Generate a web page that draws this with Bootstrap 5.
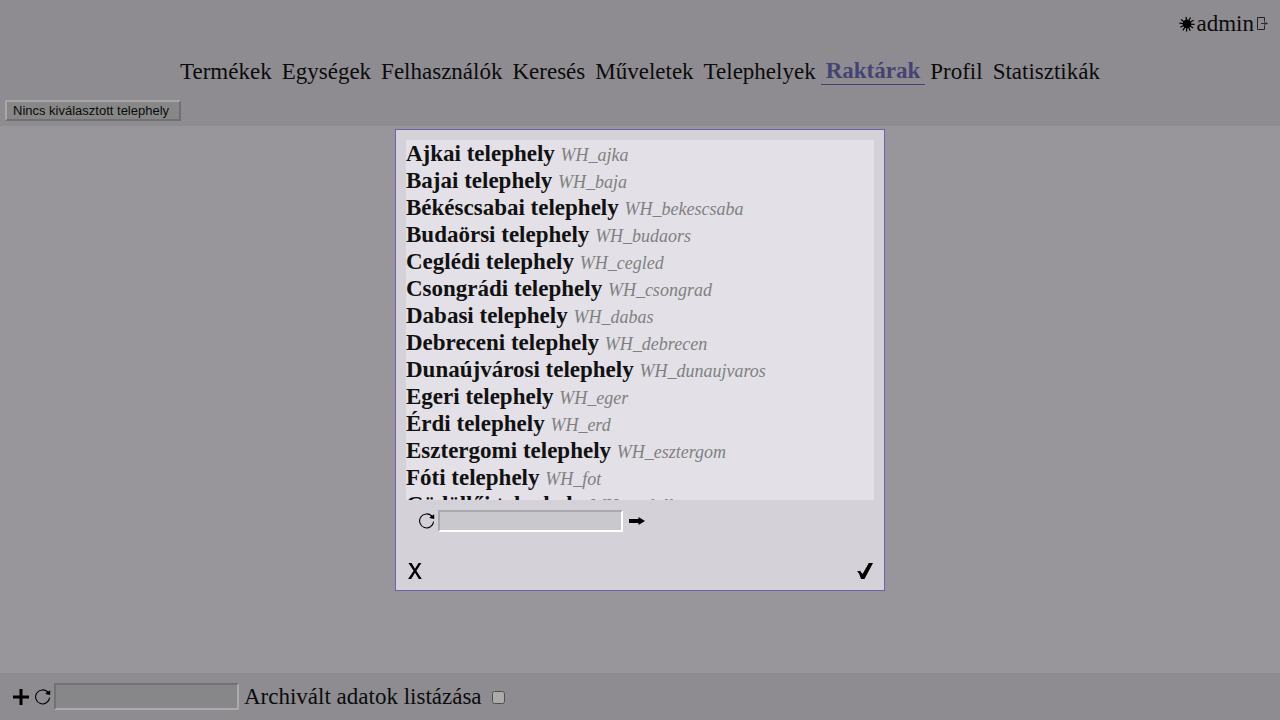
<!DOCTYPE html>
<html lang="hu">
<head>
<meta charset="utf-8">
<meta name="viewport" content="width=device-width, initial-scale=1">
<title>Raktárak</title>
<link href="https://cdn.jsdelivr.net/npm/bootstrap@5.3.0/dist/css/bootstrap.min.css" rel="stylesheet">
<style>
  body {
    font-family: "Liberation Serif", "Times New Roman", serif;
    font-size: 23px;
    line-height: 27px;
    color: #111;
    background: #e3e0e7;
  }
  .bar { background: #d4d1d8; }
  .user-row { padding: 10px 12px 10px 0; gap: 2px; }
  .main-nav a { color: #111; padding: 0 5px; text-decoration: none; }
  .main-nav a.active { color: #6865ac; font-weight: bold; border-bottom: 1px solid #6865ac; }
  .main-nav { padding-top: 10px; }
  .site-row { padding: 15px 5px 5px; }
  .site-btn {
    font: 13px/15px "Liberation Sans", Arial, sans-serif;
    color: #111;
    background: #c9c9cb;
    border: 2px solid;
    border-color: #fafafa #a8a8aa #a8a8aa #fafafa;
    padding: 1px 6px;
    height: 21px;
    min-width: 176px;
  }
  .icon-btn { background: none; border: 0; padding: 0; color: #000; line-height: 0; }
  .icon-btn svg, .user-row svg { display: block; width: 16px; height: 16px; }
  .field {
    width: 185px;
    height: 22px;
    background: #c9c8cc;
    border: 2px solid;
    border-color: #aaaaac #fff #fff #aaaaac;
    padding: 1px 2px;
    font-size: 13px;
  }
  .reload { margin-right: 3px; }
  .foot { padding: 10px 13px; }
  .foot .reload { margin-left: 6px; }
  .foot label { padding-left: 5px; }
  .foot .field { height: 27px; }
  .foot input[type=checkbox] { width: 13px; height: 13px; margin: 2px 0 0 10px; }
  .shade { background: rgba(0, 0, 0, .33); z-index: 10; }
  .picker { width: 490px; max-width: 100%; background: #d4d1d8; border: 1px solid #6865ac; padding: 10px; }
  .site-list { height: 50vh; overflow-y: auto; scrollbar-width: none; background: #e3e0e7; }
  .site-list::-webkit-scrollbar { display: none; }
  .site-list i { font-size: 18px; line-height: 20px; color: #808080; }
  .search-row { padding: 10px 12px 0 13px; }
  .search-row .go { margin-left: 6px; }
  .action-row { padding: 31px 1px 1px; }
</style>
</head>
<body>
<svg class="d-none" aria-hidden="true">
  <symbol id="reload" viewBox="0 0 16 16">
    <path d="M14.6 8.6A7 7 0 1 1 12.8 3.2" fill="none" stroke="currentColor" stroke-width="1.1"/>
    <path d="M10.3 5.1L15.2 6V1.2L13.6 2.6L12.4 1.8L11.7 3.4Z" fill="currentColor"/>
  </symbol>
</svg>

<div class="d-flex flex-column min-vh-100">
  <header class="bar">
    <div class="user-row d-flex justify-content-end align-items-center">
      <svg viewBox="0 0 16 16" aria-hidden="true">
        <circle cx="8" cy="8" r="4.4"/>
        <path d="M8 8L7 .8M8 8L11.5 1.5M8 8L14.6 4.3M8 8L15.6 8.3M8 8L14.2 12M8 8L11.2 14.8M8 8L7.5 15.6M8 8L3.8 14.3M8 8L1.2 11.3M8 8L.4 7.2M8 8L2 3.4" fill="none" stroke="#000" stroke-width="1.2"/>
      </svg>
      <span>admin</span>
      <button type="button" class="icon-btn" aria-label="Kijelentkezés">
        <svg viewBox="0 0 12 16" style="width:12px" aria-hidden="true">
          <path d="M8.5 5.5V1.5H1.5V13.5H8.5V9.5" fill="none" stroke="#333"/>
          <path d="M8.5 5V10" stroke="#777"/>
          <path d="M5 7.5H11.5M9.5 6.5L11.3 7.5L9.5 8.5" fill="none" stroke="#444"/>
        </svg>
      </button>
    </div>
    <nav class="main-nav d-flex flex-wrap justify-content-center align-items-center">
      <a href="#">Termékek</a>
      <a href="#">Egységek</a>
      <a href="#">Felhasználók</a>
      <a href="#">Keresés</a>
      <a href="#">Műveletek</a>
      <a href="#">Telephelyek</a>
      <a href="#" class="active" aria-current="page">Raktárak</a>
      <a href="#">Profil</a>
      <a href="#">Statisztikák</a>
    </nav>
    <div class="site-row d-flex">
      <button type="button" class="site-btn text-start">Nincs kiválasztott telephely</button>
    </div>
  </header>

  <main class="flex-grow-1"></main>

  <footer class="bar foot d-flex align-items-center">
    <button type="button" class="icon-btn" aria-label="Új">
      <svg viewBox="0 0 16 16" aria-hidden="true"><path d="M8 0V16M0 8H16" stroke="currentColor" stroke-width="3"/></svg>
    </button>
    <button type="button" class="icon-btn reload" aria-label="Frissítés"><svg aria-hidden="true"><use href="#reload"/></svg></button>
    <input type="text" class="field" aria-label="Keresés">
    <label for="archived">Archivált adatok listázása</label>
    <input type="checkbox" id="archived">
  </footer>
</div>

<div class="shade position-fixed top-0 start-0 w-100 h-100 d-flex align-items-center justify-content-center">
  <section class="picker" role="dialog" aria-label="Telephely kiválasztása">
    <div class="site-list">
      <div><b>Ajkai telephely</b> <i>WH_ajka</i></div>
      <div><b>Bajai telephely</b> <i>WH_baja</i></div>
      <div><b>Békéscsabai telephely</b> <i>WH_bekescsaba</i></div>
      <div><b>Budaörsi telephely</b> <i>WH_budaors</i></div>
      <div><b>Ceglédi telephely</b> <i>WH_cegled</i></div>
      <div><b>Csongrádi telephely</b> <i>WH_csongrad</i></div>
      <div><b>Dabasi telephely</b> <i>WH_dabas</i></div>
      <div><b>Debreceni telephely</b> <i>WH_debrecen</i></div>
      <div><b>Dunaújvárosi telephely</b> <i>WH_dunaujvaros</i></div>
      <div><b>Egeri telephely</b> <i>WH_eger</i></div>
      <div><b>Érdi telephely</b> <i>WH_erd</i></div>
      <div><b>Esztergomi telephely</b> <i>WH_esztergom</i></div>
      <div><b>Fóti telephely</b> <i>WH_fot</i></div>
      <div><b>Gödöllői telephely</b> <i>WH_godollo</i></div>
    </div>
    <div class="search-row d-flex align-items-center">
      <button type="button" class="icon-btn reload" aria-label="Frissítés"><svg aria-hidden="true"><use href="#reload"/></svg></button>
      <input type="text" class="field" aria-label="Telephely keresése">
      <button type="button" class="icon-btn go" aria-label="Tovább">
        <svg viewBox="0 0 16 16" aria-hidden="true"><path d="M0 6H9.5V4L16 8L9.5 12V10H0Z" fill="currentColor"/></svg>
      </button>
    </div>
    <div class="action-row d-flex justify-content-between">
      <button type="button" class="icon-btn" aria-label="Mégse">
        <svg viewBox="0 0 16 16" aria-hidden="true"><path d="M1.4 0H4.6L8 5.8L11.6 0H14.4L9.4 7.8L14.8 16H11.8L8 9.8L4.2 16H1.1L6.6 7.8Z" fill="currentColor"/></svg>
      </button>
      <button type="button" class="icon-btn" aria-label="Kiválasztás">
        <svg viewBox="0 0 16 16" aria-hidden="true"><path d="M0 8.6L3 7.8L5.6 11L11.8 0H16L7.5 16H4L2 10.5Z" fill="currentColor"/></svg>
      </button>
    </div>
  </section>
</div>
<script src="https://cdn.jsdelivr.net/npm/bootstrap@5.3.0/dist/js/bootstrap.bundle.min.js"></script>
</body>
</html>
